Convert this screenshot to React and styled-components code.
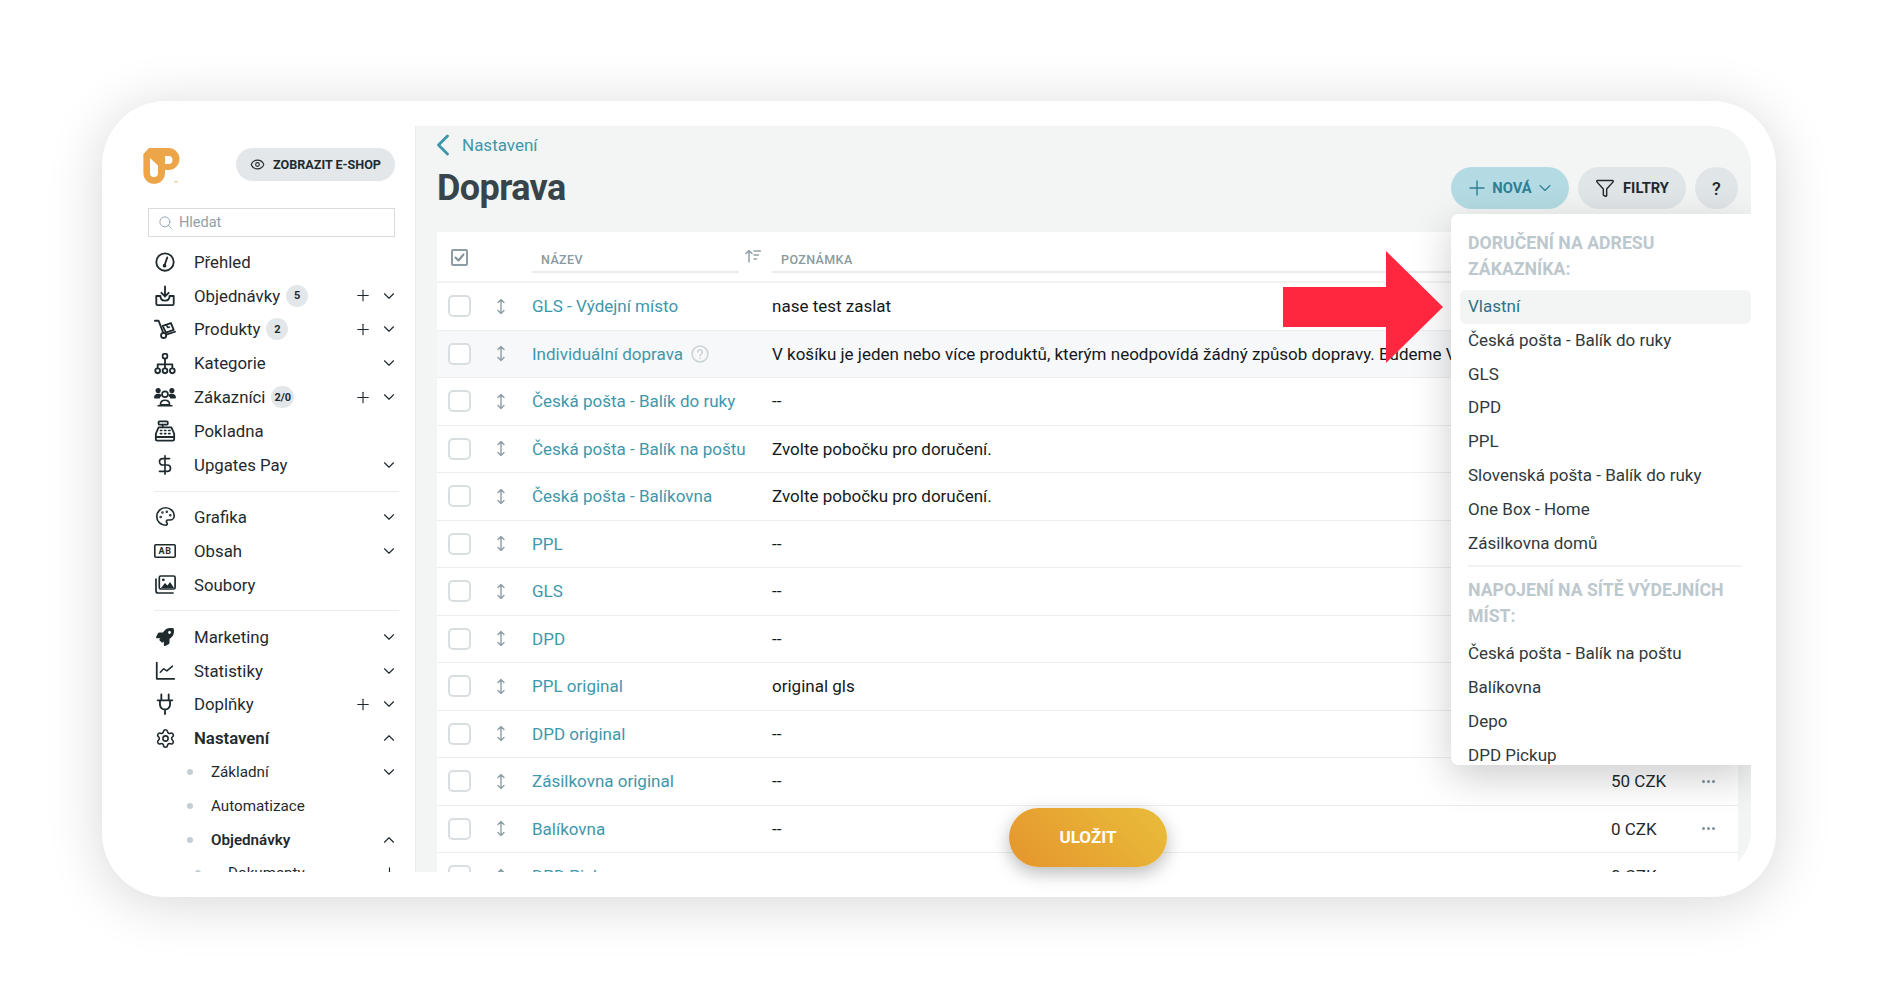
import React from "react";
import styled, { createGlobalStyle } from "styled-components";
import { ChevronDown, ChevronUp, ChevronLeft, Plus, Eye, Search, Palette, Settings, DollarSign, Filter } from "lucide-react";
import { FaRocket } from "react-icons/fa";

const Global = createGlobalStyle`
  html, body { margin: 0; padding: 0; background: #fff; }
  body { font-family: Roboto, "Liberation Sans", sans-serif; color: #1f2a2e; overflow: hidden; }
  * { box-sizing: border-box; }
`;

const Page = styled.div`
  width: 1877px;
  height: 999px;
  padding: 101px 101px 102px 102px;
`;
const Card = styled.div`
  width: 1674px;
  height: 796px;
  background: #fff;
  border-radius: 64px;
  box-shadow: 0 6px 55px rgba(0, 0, 0, 0.16);
  padding: 25px 25px 24px 0;
  display: flex;
`;
const Sidebar = styled.aside`
  width: 314px;
  height: 746px;
  overflow: hidden;
  flex: none;
  border-right: 1px solid #eceeee;
`;
const SideHead = styled.div`
  display: flex;
  align-items: flex-start;
  justify-content: space-between;
  height: 60px;
  margin: 22px 20px 0 41px;
`;
const Logo = styled.svg`
  width: 37px;
  height: 37px;
  flex: none;
`;
const ShopButton = styled.div`
  width: 159px;
  height: 33px;
  border-radius: 17px;
  background: #e3e7e9;
  display: flex;
  align-items: center;
  justify-content: center;
  gap: 8px;
  font-size: 12.6px;
  font-weight: 700;
  color: #1f2a2e;
`;
const SearchBox = styled.div`
  margin: 0 20px 8px 46px;
  height: 29px;
  border: 1px solid #d7dddf;
  display: flex;
  align-items: center;
  gap: 6px;
  padding-left: 9px;
  color: #8fa1a8;
  font-size: 14.5px;
`;
const Nav = styled.nav`
  margin: 0 16px 0 52px;
`;
const Row = styled.div`
  height: 33.8px;
  display: flex;
  align-items: center;
  padding-left: ${(p) => p.$indent || 0}px;
  font-size: ${(p) => p.$size || 16.8}px;
  font-weight: ${(p) => (p.$bold ? 600 : 400)};
  color: #1f2a2e;
`;
const IconBox = styled.span`
  width: 22px;
  height: 22px;
  margin-right: 18px;
  flex: none;
  display: flex;
  align-items: center;
  justify-content: center;
  color: #1f2a2e;
`;
const Dot = styled.span`
  width: 6px;
  height: 6px;
  border-radius: 50%;
  background: #c4cfd3;
  margin-right: ${(p) => p.$gap || 18}px;
  flex: none;
`;
const Badge = styled.span`
  min-width: 22px;
  height: 22px;
  border-radius: 11px;
  background: #e3e7e9;
  margin-left: 6px;
  padding: 0 3px;
  display: flex;
  align-items: center;
  justify-content: center;
  font-size: 11px;
  font-weight: 700;
`;
const Actions = styled.span`
  margin-left: auto;
  display: flex;
  align-items: center;
`;
const PlusBox = styled.span`
  width: 18px;
  display: flex;
  justify-content: center;
  margin-right: 7px;
`;
const ChevBox = styled.span`
  width: 20px;
  display: flex;
  justify-content: center;
`;
const Divider = styled.div`
  height: 1px;
  background: #eceeee;
  margin: 9px 0 8.5px;
`;
const Main = styled.main`
  position: relative;
  width: 1335px;
  height: 746px;
  flex: none;
  background: #f3f5f5;
  border-radius: 0 40px 40px 0;
`;
const MainClip = styled.div`
  height: 746px;
  overflow: hidden;
  padding: 0 13px 0 21px;
`;
const Back = styled.div`
  height: 38px;
  margin: 0 0 2px -12.5px;
  display: flex;
  align-items: center;
  gap: 1.5px;
  color: #3f97ab;
  font-size: 17px;
`;
const TitleRow = styled.div`
  display: flex;
  align-items: center;
  height: 44px;
  margin-bottom: 22px;
  gap: 9px;
`;
const Title = styled.h1`
  margin: 0 auto 0 0;
  font-size: 36px;
  font-weight: 700;
  letter-spacing: -0.6px;
  color: #37454a;
`;
const Pill = styled.div`
  height: 42px;
  width: ${(p) => p.$w}px;
  border-radius: 21px;
  background: ${(p) => p.$bg || "#e0e5e7"};
  color: ${(p) => p.$fg || "#1f2a2e"};
  display: flex;
  align-items: center;
  justify-content: center;
  gap: ${(p) => p.$gap ?? 8}px;
  font-size: ${(p) => p.$size || 14.7}px;
  font-weight: ${(p) => p.$weight || 700};
`;
const Table = styled.div`
  width: 1301px;
  background: #fff;
`;
const HeadRow = styled.div`
  height: 51px;
  display: grid;
  grid-template-columns: 95px 207px 33px 1fr;
  border-bottom: 2px solid #f1f3f3;
`;
const HeadCheck = styled.div`
  width: 17px;
  height: 17px;
  margin: 17px 0 0 14px;
  border: 2px solid #8d9da4;
  border-radius: 2px;
  display: flex;
  align-items: center;
  justify-content: center;
`;
const HeadCell = styled.div`
  margin-top: 15px;
  height: 26px;
  padding: 5px 0 0 9px;
  border-bottom: 2px solid #e9ecec;
  font-size: 12.5px;
  font-weight: 500;
  letter-spacing: 0.4px;
  color: #8a9a9f;
`;
const SortBox = styled.div`
  padding: 16px 0 0 6px;
`;
const TRow = styled.div`
  height: 47.5px;
  display: grid;
  grid-template-columns: 95px 240px 839px 82px 30px;
  align-items: center;
  font-size: 17px;
  background: ${(p) => (p.$hl ? "#f7f8fa" : "#fff")};
  border-bottom: 1px solid #eceeee;
`;
const Handle = styled.div`
  display: flex;
  align-items: center;
  gap: 25px;
  padding-left: 11px;
`;
const Box = styled.span`
  width: 23px;
  height: 22px;
  border: 2px solid #d9dfe1;
  border-radius: 5px;
  background: #fff;
`;
const Name = styled.div`
  color: #3f97ab;
  display: flex;
  align-items: center;
  gap: 8px;
  white-space: nowrap;
`;
const Note = styled.div`
  color: #14191b;
  white-space: nowrap;
  overflow: hidden;
`;
const Price = styled.div`
  color: #1f2a2e;
`;
const Dots = styled.div`
  display: flex;
  justify-content: center;
  gap: 2px;
  & > i {
    width: 3px;
    height: 3px;
    border-radius: 50%;
    background: #7e929a;
  }
`;
const Menu = styled.div`
  position: absolute;
  top: 88px;
  left: 1035px;
  right: 0;
  height: 551px;
  background: #fff;
  border-radius: 8px 0 0 8px;
  overflow: hidden;
  padding: 17px 0 0 9px;
`;
const MenuShadow = styled.div`
  position: absolute;
  top: 88px;
  left: 1035px;
  right: 0;
  height: 551px;
  border-radius: 8px 0 0 8px;
  box-shadow: 0 12px 40px rgba(0, 0, 0, 0.2);
  clip-path: inset(-70px 0 -70px -70px);
`;
const MenuHead = styled.div`
  padding-left: 8px;
  padding-right: 9px;
  font-size: 17.7px;
  line-height: 25.5px;
  font-weight: 700;
  color: #bcc8cd;
  margin-bottom: ${(p) => p.$mb}px;
`;
const MenuItem = styled.div`
  height: 33.8px;
  line-height: 33.8px;
  padding-left: 8px;
  font-size: 17px;
  border-radius: 6px;
  color: ${(p) => (p.$active ? "#2e7186" : "#30393c")};
  background: ${(p) => (p.$active ? "#f3f5f5" : "transparent")};
`;
const MenuRule = styled.div`
  height: 2px;
  background: #f1f3f3;
  margin: 5px 9px 11px 8px;
`;
const Save = styled.div`
  position: absolute;
  left: 593px;
  top: 682px;
  width: 158px;
  height: 59px;
  padding-bottom: 2px;
  border-radius: 30px;
  background: linear-gradient(45deg, #e5952c, #e9bd3b);
  color: #fff;
  font-size: 17px;
  font-weight: 700;
  display: flex;
  align-items: center;
  justify-content: center;
  box-shadow: 0 6px 18px rgba(0, 0, 0, 0.28);
`;
const Arrow = styled.svg`
  position: absolute;
  left: 867px;
  top: 125px;
  width: 160px;
  height: 112px;
`;

const S = { fill: "none", stroke: "currentColor", strokeWidth: 2, strokeLinecap: "round", strokeLinejoin: "round" };
const Ic = ({ children, size = 22 }) => (
  <svg width={size} height={size} viewBox="0 0 24 24" {...S}>{children}</svg>
);

const GaugeI = () => (
  <Ic><circle cx="12" cy="12" r="9.5" /><path d="M11.5 15.5 14.5 7" /><circle cx="11.5" cy="16" r="1" fill="currentColor" /></Ic>
);
const InboxI = () => (
  <Ic>
    <path d="M12 1.5v11M8 8.5l4 4 4-4" />
    <path d="M7 12H2.5v8.5a1.5 1.5 0 0 0 1.5 1.5h16a1.5 1.5 0 0 0 1.5-1.5V12H17c0 3-2 5-5 5s-5-2-5-5Z" fill="none" />
  </Ic>
);
const TruckI = () => (
  <Ic>
    <path d="M1 3h4l5 13" />
    <circle cx="10.5" cy="19" r="2.8" />
    <path d="M13.3 18.2 23 15" />
    <path d="m9.5 8.5 9-3 3 7.5-8.5 3Z" />
    <path d="m13.5 7.5 1.5 3 2-.7" strokeWidth="1.5" />
  </Ic>
);
const SitemapI = () => (
  <Ic size={23}>
    <rect x="9.5" y="1.5" width="5" height="5" rx="1.5" />
    <path d="M12 7v6M4 17v-4h16v4M12 13v4" />
    <circle cx="4" cy="20" r="2.6" /><circle cx="12" cy="20" r="2.6" /><circle cx="20" cy="20" r="2.6" />
  </Ic>
);
const UsersI = () => (
  <svg width="24" height="22" viewBox="0 0 24 22">
    <circle cx="4.5" cy="4" r="2.8" fill="currentColor" />
    <circle cx="19.5" cy="4" r="2.8" fill="currentColor" />
    <path d="M0 12c0-3 2-4.500 4.500-4.500S8 8 8.500 9.500C7 10.500 6.500 11.500 6.300 12.500H1Z" fill="currentColor" />
    <path d="M24 12c0-3-2-4.500-4.500-4.500S16 8 15.500 9.500c1.500 1 2 2 2.200 3H23Z" fill="currentColor" />
    <circle cx="12" cy="8" r="3.200" fill="none" stroke="currentColor" strokeWidth="1.800" />
    <path d="M7 19.500c0-3.500 2-5 5-5s5 1.500 5 5ZM4.500 20.500h15" fill="none" stroke="currentColor" strokeWidth="1.800" strokeLinejoin="round" strokeLinecap="round" />
  </svg>
);
const RegisterI = () => (
  <Ic>
    <rect x="5" y="1.500" width="10" height="3.500" rx="1" />
    <path d="M9.500 5v3" />
    <path d="M5 8h14l3 7v6a1.500 1.500 0 0 1-1.500 1.500h-17A1.500 1.500 0 0 1 2 21v-6Z" />
    <path d="M2 18.500h20" />
    <path d="M7 11.500h1.500M11.500 11.500H13M16 11.500h1.500M7 14.800h1.500M11.500 14.800H13M16 14.800h1.500" strokeWidth="1.800" />
  </Ic>
);
const AbI = () => (
  <svg width="22" height="14" viewBox="0 0 22 14">
    <rect x="0.800" y="0.800" width="20.400" height="12.400" rx="1" fill="none" stroke="currentColor" strokeWidth="1.600" />
    <text x="11" y="10.400" textAnchor="middle" fontSize="9" fontWeight="700" letterSpacing="0.500" fontFamily="Roboto, sans-serif" fill="currentColor">AB</text>
  </svg>
);
const ImagesI = () => (
  <svg width="21" height="19" viewBox="0 0 21 19">
    <path d="M1 4v12a2 2 0 0 0 2 2h15" fill="none" stroke="currentColor" strokeWidth="1.700" strokeLinecap="round" />
    <rect x="4.300" y="1" width="15.800" height="13" rx="1.500" fill="none" stroke="currentColor" strokeWidth="1.700" />
    <path d="m6 13 4-5 2.500 2.500L15 7l4 6Z" fill="currentColor" />
    <circle cx="8.300" cy="4.800" r="1.400" fill="currentColor" />
  </svg>
);
const ChartI = () => (
  <Ic size={21}>
    <path d="M2 3v18.500h20" />
    <path d="m6 14 4-4 3.500 2.500L20 7" strokeWidth="1.700" />
  </Ic>
);
const PlugI = () => (
  <Ic>
    <path d="M8 1.500V8M16 1.500V8M4 8h16M6.500 8v4.500a5.500 5.500 0 0 0 11 0V8M12 18v5" />
  </Ic>
);
const UpDown = () => (
  <svg width="10" height="17" viewBox="0 0 10 17" fill="none" stroke="#8f9fa6" strokeWidth="1.400" strokeLinecap="round" strokeLinejoin="round">
    <path d="M5 1.500v14M2 4.500l3-3 3 3M2 12.500l3 3 3-3" />
  </svg>
);
const SortI = () => (
  <svg width="16" height="14" viewBox="0 0 16 14" fill="none" stroke="#93a2a8" strokeWidth="1.500" strokeLinecap="round" strokeLinejoin="round">
    <path d="M4 13V1.500M1 4.500l3-3 3 3" />
    <path d="M9 2h6.500M9 6h4.500M9 10h2.500" />
  </svg>
);
const Help = () => (
  <svg width="18" height="18" viewBox="0 0 17 17" fill="none" stroke="#c9d2d5" strokeWidth="1.400" strokeLinecap="round">
    <circle cx="8.500" cy="8.500" r="7.500" />
    <path d="M6.300 6.600a2.200 2.200 0 1 1 3.400 1.900c-.8.500-1.200.9-1.200 1.900M8.500 12.500v.2" />
  </svg>
);

const chevD = <ChevronDown size={18} strokeWidth={1.5} />;
const chevU = <ChevronUp size={18} strokeWidth={1.5} />;

const NavRow = ({ icon, label, badge, plus, chev, bold }) => (
  <Row $bold={bold}>
    <IconBox>{icon}</IconBox>
    {label}
    {badge && <Badge>{badge}</Badge>}
    <Actions>
      {plus && <PlusBox><Plus size={19} strokeWidth={1.5} /></PlusBox>}
      {chev && <ChevBox>{chev}</ChevBox>}
    </Actions>
  </Row>
);
const SubRow = ({ label, bold, chev, plus, indent = 33, gap }) => (
  <Row $indent={indent} $bold={bold} $size={15.2}>
    <Dot $gap={gap} />
    {label}
    <Actions>
      {plus && <ChevBox><Plus size={19} strokeWidth={1.5} /></ChevBox>}
      {chev && <ChevBox>{chev}</ChevBox>}
    </Actions>
  </Row>
);

const rows = [
  ["GLS - Výdejní místo", "nase test zaslat"],
  ["Individuální doprava", "V košíku je jeden nebo více produktů, kterým neodpovídá žádný způsob dopravy. Budeme Vás kontaktovat.", null, true],
  ["Česká pošta - Balík do ruky", "--"],
  ["Česká pošta - Balík na poštu", "Zvolte pobočku pro doručení."],
  ["Česká pošta - Balíkovna", "Zvolte pobočku pro doručení."],
  ["PPL", "--"],
  ["GLS", "--"],
  ["DPD", "--"],
  ["PPL original", "original gls"],
  ["DPD original", "--"],
  ["Zásilkovna original", "--", "50 CZK"],
  ["Balíkovna", "--", "0 CZK"],
  ["DPD Pickup", "--", "0 CZK"],
];

const menuA = ["Česká pošta - Balík do ruky", "GLS", "DPD", "PPL", "Slovenská pošta - Balík do ruky", "One Box - Home", "Zásilkovna domů"];
const menuB = ["Česká pošta - Balík na poštu", "Balíkovna", "Depo", "DPD Pickup"];

export default function App() {
  return (
    <Page>
      <Global />
      <Card>
        <Sidebar>
          <SideHead>
            <Logo viewBox="0 0 37 37">
              <path
                fillRule="evenodd"
                fill="#eca548"
                d="M6 0H25.500A11 11 0 0 1 25.500 22H22V25A10.800 10.800 0 0 1 0.400 25V6ZM7 10V25A4 4 0 0 0 15 25V17.500ZM22 8V16H25.500A4 4 0 0 0 25.500 8Z"
              />
              <rect x="31" y="33" width="4" height="1.200" fill="#eca548" opacity="0.6" />
            </Logo>
            <ShopButton><Eye size={15} strokeWidth={1.7} />ZOBRAZIT E-SHOP</ShopButton>
          </SideHead>
          <SearchBox><Search size={15} strokeWidth={1.5} />Hledat</SearchBox>
          <Nav>
            <NavRow icon={<GaugeI />} label="Přehled" />
            <NavRow icon={<InboxI />} label="Objednávky" badge="5" plus chev={chevD} />
            <NavRow icon={<TruckI />} label="Produkty" badge="2" plus chev={chevD} />
            <NavRow icon={<SitemapI />} label="Kategorie" chev={chevD} />
            <NavRow icon={<UsersI />} label="Zákazníci" badge="2/0" plus chev={chevD} />
            <NavRow icon={<RegisterI />} label="Pokladna" />
            <NavRow icon={<DollarSign size={22} strokeWidth={1.8} />} label="Upgates Pay" chev={chevD} />
            <Divider />
            <NavRow icon={<Palette size={21} strokeWidth={1.9} />} label="Grafika" chev={chevD} />
            <NavRow icon={<AbI />} label="Obsah" chev={chevD} />
            <NavRow icon={<ImagesI />} label="Soubory" />
            <Divider />
            <NavRow icon={<FaRocket size={18} />} label="Marketing" chev={chevD} />
            <NavRow icon={<ChartI />} label="Statistiky" chev={chevD} />
            <NavRow icon={<PlugI />} label="Doplňky" plus chev={chevD} />
            <NavRow icon={<Settings size={21} strokeWidth={1.8} />} label="Nastavení" bold chev={chevU} />
            <SubRow label="Základní" chev={chevD} />
            <SubRow label="Automatizace" />
            <SubRow label="Objednávky" bold chev={chevU} />
            <SubRow label="Dokumenty" indent={41} gap={27} plus />
          </Nav>
        </Sidebar>
        <Main>
          <MainClip>
            <Back><ChevronLeft size={36} strokeWidth={1.9} />Nastavení</Back>
            <TitleRow>
              <Title>Doprava</Title>
              <Pill $w={118} $bg="#b4dbe3" $fg="#2e8094" $gap={3}>
                <Plus size={24} strokeWidth={1.4} />NOVÁ<ChevronDown size={20} strokeWidth={1.3} />
              </Pill>
              <Pill $w={108}><Filter size={20} strokeWidth={1.7} />FILTRY</Pill>
              <Pill $w={43} $size={18} $weight={500}>?</Pill>
            </TitleRow>
            <Table>
              <HeadRow>
                <div>
                  <HeadCheck>
                    <svg width="11" height="9" viewBox="0 0 11 9" fill="none" stroke="#7f9097" strokeWidth="2" strokeLinecap="round" strokeLinejoin="round"><path d="m1.500 4.500 3 3 5-6" /></svg>
                  </HeadCheck>
                </div>
                <HeadCell>NÁZEV</HeadCell>
                <SortBox><SortI /></SortBox>
                <HeadCell>POZNÁMKA</HeadCell>
              </HeadRow>
              {rows.map(([name, note, price, hl]) => (
                <TRow key={name} $hl={hl}>
                  <Handle><Box /><UpDown /></Handle>
                  <Name>{name}{hl && <Help />}</Name>
                  <Note>{note}</Note>
                  <Price>{price}</Price>
                  {price ? <Dots><i /><i /><i /></Dots> : <span />}
                </TRow>
              ))}
            </Table>
          </MainClip>
          <MenuShadow />
          <Menu>
            <MenuHead $mb={8}>DORUČENÍ NA ADRESU ZÁKAZNÍKA:</MenuHead>
            <MenuItem $active>Vlastní</MenuItem>
            {menuA.map((m) => <MenuItem key={m}>{m}</MenuItem>)}
            <MenuRule />
            <MenuHead $mb={8}>NAPOJENÍ NA SÍTĚ VÝDEJNÍCH MÍST:</MenuHead>
            {menuB.map((m) => <MenuItem key={m}>{m}</MenuItem>)}
          </Menu>
          <Arrow viewBox="0 0 160 112">
            <polygon fill="#ff2740" points="0,36 103,36 103,0 160,56 103,112 103,76 0,76" />
          </Arrow>
          <Save>ULOŽIT</Save>
        </Main>
      </Card>
    </Page>
  );
}
